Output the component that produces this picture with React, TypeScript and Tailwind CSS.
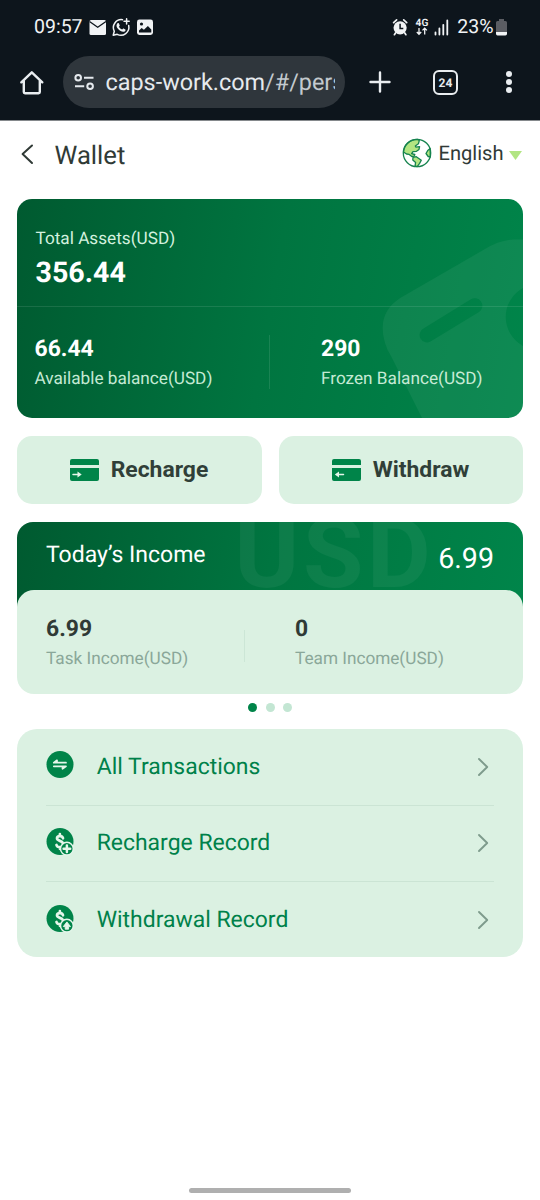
import React from "react";

function StatusBar() {
  return (
    <div className="flex h-[54px] items-center pl-[34px] pr-[32px] text-[#f1f3f5]">
      <span className="w-[54px] text-[19.5px] leading-6">09:57</span>
      <svg width="70" height="24" viewBox="0 0 70 24" className="ml-[1px]">
        <rect x="0.5" y="5" width="16.5" height="15" rx="1.5" fill="#f1f3f5" />
        <path d="M0.5 6.5 L8.7 12.2 L17 6.5" fill="none" stroke="#0d151c" strokeWidth="1.3" />
        <g fill="none" stroke="#f1f3f5" strokeWidth="1.5" strokeLinecap="round" strokeLinejoin="round">
          <path d="M33.5 4.7 A8 8 0 0 0 25.3 16.3 L24.2 20.3 L28.2 19.3 A8 8 0 0 0 39.7 10.5" />
          <path d="M37.6 3.7 v5.2 M35 6.3 h5.2" />
        </g>
        <path d="M28.3 8.4 c.5-.6 1.3-.6 1.6 0 l.8 1.8 c.2.5-.6 1.2-.7 1.5 c.7 1.4 1.8 2.3 3.1 2.8 c.5-.3 1-1.2 1.5-1 l1.7.9 c.6.3.2 1.3-.3 1.8 c-1.2 1-2.9.7-4.4-.1 c-2-1.1-3.8-3.1-4.1-5 c-.1-1.1.2-2 .8-2.7Z" fill="#f1f3f5" />
        <rect x="48" y="4.5" width="16" height="15.5" rx="2.4" fill="#f1f3f5" />
        <circle cx="52.5" cy="9" r="1.6" fill="#0d151c" />
        <path d="M50 17.5 v-2 l2.7-2.5 2.2 1.7 4-3.8 3.4 3.5 v3.1Z" fill="#0d151c" />
      </svg>
      <div className="flex-1" />
      <svg width="64" height="24" viewBox="0 0 64 24" className="mr-[1px]">
        <g fill="none" stroke="#f1f3f5" strokeWidth="1.7" strokeLinecap="round">
          <path d="M1.6 7.6 l3-2.8 M14.7 7.6 l-3-2.8 M3.5 18 l-1.1 1.7 M12.8 18 l1.1 1.7" />
        </g>
        <circle cx="8.1" cy="12.8" r="6.6" fill="#f1f3f5" />
        <path d="M8.1 8.8 v4.6 h3.2" fill="none" stroke="#0d151c" strokeWidth="1.5" />
        <text x="23.6" y="11.2" fontFamily="Roboto" fontWeight="600" fontSize="10.2" fill="#f1f3f5">4G</text>
        <path d="M27 13 v6 M24.8 17 l2.2 2.3 2.2-2.3 M32.7 19.5 v-6 M30.5 15.4 l2.2-2.3 2.2 2.3" fill="none" stroke="#f1f3f5" strokeWidth="1.3" />
        <path d="M43.5 17.5 v2 M47.4 13.5 v6 M51.3 9.8 v9.7 M55.3 5.5 v14" stroke="#f1f3f5" strokeWidth="1.8" strokeLinecap="round" />
      </svg>
      <span className="text-[19.5px] leading-6">23%</span>
      <svg width="12" height="24" viewBox="0 0 12 24" className="ml-[2.5px]">
        <path d="M3 4 h5 v2 h1.5 a1.6 1.6 0 0 1 1.5 1.6 V17 H0 V7.6 A1.6 1.6 0 0 1 1.5 6 H3Z" fill="#5b5d63" />
        <path d="M0 17 h11 v1.8 a1.6 1.6 0 0 1 -1.6 1.6 h-7.8 a1.6 1.6 0 0 1 -1.6 -1.6Z" fill="#f1f3f5" />
      </svg>
    </div>
  );
}

function BrowserBar() {
  return (
    <div className="flex h-[67px] items-start border-b border-[#85898c] text-[#e6eaee]">
      <svg width="26" height="28" viewBox="0 0 26 28" className="ml-[19px] mt-[15px]" fill="none" stroke="#e9edf0" strokeWidth="2.4" strokeLinejoin="round" strokeLinecap="round">
        <path d="M2.3 13.3 L12.8 3.3 L23.3 13.3 M4.8 11.5 V23 a1.2 1.2 0 0 0 1.2 1.2 h13.6 a1.2 1.2 0 0 0 1.2-1.2 V11.5" />
      </svg>
      <div className="ml-[18px] mt-[2px] flex h-[52px] w-[282px] items-center rounded-full bg-[#2f363c] pl-[11px] pr-[10px]">
        <svg width="22" height="22" viewBox="0 0 22 22" className="shrink-0" fill="none" stroke="#e6eaee" strokeWidth="2">
          <circle cx="4.2" cy="6.8" r="2.8" />
          <path d="M10 6.8 h9.5 M1 15.3 h9.2" />
          <circle cx="16.1" cy="15.3" r="2.8" />
        </svg>
        <div className="ml-[9.5px] min-w-0 flex-1 overflow-hidden whitespace-nowrap text-[23.4px] leading-8">
          caps-work.com<span className="text-[#c3c9ce]">/#/pers</span>
        </div>
      </div>
      <svg width="22" height="22" viewBox="0 0 22 22" className="ml-[24px] mt-[17px]">
        <path d="M11 1.5 v19 M1.5 11 h19" stroke="#e9edf0" strokeWidth="2.4" strokeLinecap="round" />
      </svg>
      <div className="ml-[42px] mt-[16px] flex h-[25px] w-[25px] items-center justify-center rounded-[6px] border-2 border-[#e9edf0] text-[12px] font-bold leading-none">24</div>
      <svg width="8" height="24" viewBox="0 0 8 24" className="ml-[47px] mt-[16px]" fill="#e9edf0">
        <circle cx="4" cy="4" r="3" />
        <circle cx="4" cy="12" r="3" />
        <circle cx="4" cy="20" r="3" />
      </svg>
    </div>
  );
}

function Globe() {
  return (
    <svg width="30" height="30" viewBox="0 0 30 30">
      <circle cx="15" cy="15" r="13.7" fill="#fff" />
      <g fill="#b2e582" stroke="#16834e" strokeWidth="1.3" strokeLinejoin="round">
        <path d="M1.5 14 C2 7 7.5 1.6 15.5 1.4 L17.3 2.5 L16.4 5.8 L13.3 8 L14 9.2 L17.6 8.6 L17 11.4 L14.5 13.3 L11 13.6 L9.6 15.6 L12.8 16.5 L12.2 18.2 L9.8 18.5 L7.2 16.4 L4.5 16Z" />
        <path d="M11 19.3 L14.3 18.7 L19.3 22.3 L17.6 25.4 L15.2 28.6 L13 28 L13.6 24.6 L10.8 22.1Z" />
        <path d="M28.2 10.5 L25.7 12.6 L24 15.5 L26.2 18.5 L28.3 19Z" />
      </g>
      <circle cx="15" cy="15" r="13.7" fill="none" stroke="#16834e" strokeWidth="1.3" />
    </svg>
  );
}

function PageHeader() {
  return (
    <header className="flex h-[78px] items-start pl-[20px] pr-[18px] text-[#303a36]">
      <svg width="14" height="22" viewBox="0 0 14 22" className="mt-[22px]" fill="none" stroke="#303a36" strokeWidth="2" strokeLinecap="round" strokeLinejoin="round">
        <path d="M12 2.5 L2.6 11 L12 20" />
      </svg>
      <h1 className="ml-[20.5px] mt-[19px] text-[25.7px] leading-8">Wallet</h1>
      <div className="ml-auto mt-[16px] flex items-center">
        <Globe />
        <span className="ml-[6px] text-[20.1px] leading-8">English</span>
        <svg width="13" height="9" viewBox="0 0 13 9" className="ml-[5.5px] mt-[4px]">
          <path d="M0 0 H13 L6.5 9Z" fill="#b2e582" />
        </svg>
      </div>
    </header>
  );
}

function AssetsCard() {
  return (
    <section className="relative h-[219px] overflow-hidden rounded-[15px] bg-[linear-gradient(100deg,#005a30_0%,#007540_50%,#00854a_100%)] text-white">
      <svg className="absolute inset-0" width="506" height="219" viewBox="17 199 506 219">
        <path
          fill="#fff"
          fillOpacity="0.055"
          fillRule="evenodd"
          d="M523 239.5 H513 Q499 240.5 485 249 L401 297.5 Q376 313 385 343 Q387 350 391 356 L422 418 H523 V346 A33 33 0 0 1 523 288Z M470.5 299.5 L423.5 328.5 A6.6 6.6 0 0 0 430.5 341.5 L479 312 A7 7 0 0 0 470.5 299.5Z"
        />
      </svg>
      <div className="h-[107.5px] border-b border-white/10 pl-[18.5px] pt-[28px]">
        <div className="text-[17.2px] leading-6 text-[#d3f1df]">Total Assets(USD)</div>
        <div className="mt-[4px] text-[28.6px] font-bold leading-[34px]">356.44</div>
      </div>
      <div className="flex pt-[28px]">
        <div className="h-[54px] w-[253px] border-r border-white/10 pl-[17.5px]">
          <div className="text-[22.9px] font-bold leading-7">66.44</div>
          <div className="mt-[4.5px] text-[17.2px] leading-6 text-[#c5ead4]">Available balance(USD)</div>
        </div>
        <div className="pl-[51px]">
          <div className="text-[22.9px] font-bold leading-7">290</div>
          <div className="mt-[4.5px] text-[17.2px] leading-6 text-[#c5ead4]">Frozen Balance(USD)</div>
        </div>
      </div>
    </section>
  );
}

function CardIcon({ left = false }: { left?: boolean }) {
  return (
    <svg width="29" height="22" viewBox="0 0 29 22">
      <path d="M0 6 V2 Q0 0 2 0 H27 Q29 0 29 2 V6Z M0 9 H29 V20 Q29 22 27 22 H2 Q0 22 0 20Z" fill="#008449" />
      <g transform={left ? "translate(14.5 0) scale(-1 1)" : undefined}>
        <path d="M3 15.5 H8" stroke="#e5f6eb" strokeWidth="1.5" strokeLinecap="round" />
        <path d="M7.5 12.5 L11.7 15.5 L7.5 18.5Z" fill="#e5f6eb" />
      </g>
    </svg>
  );
}

const actionClass =
  "flex h-[68.5px] items-center justify-center gap-[11.5px] rounded-[15px] bg-[#dbf1e2] text-[22.9px] font-bold leading-7 text-[#303f38]";

function Actions() {
  return (
    <div className="mt-[17.5px] grid grid-cols-2 gap-[17px]">
      <button className={actionClass}>
        <CardIcon />
        Recharge
      </button>
      <button className={actionClass}>
        <CardIcon left />
        Withdraw
      </button>
    </div>
  );
}

function IncomeCard() {
  return (
    <section className="relative mt-[18px] h-[172px]">
      <div className="relative h-[86px] overflow-hidden rounded-t-[16px] bg-[linear-gradient(100deg,#005a30_0%,#007540_50%,#00854a_100%)] text-white">
        <span className="absolute left-[217.5px] top-[-18.5px] text-[98px] font-bold leading-[100px] tracking-[3.8px] text-white/5">USD</span>
        <div className="relative flex items-start justify-between px-[29px]">
          <span className="mt-[19px] text-[23px] leading-7">Today’s Income</span>
          <span className="mt-[19px] text-[28.6px] leading-[34px]">6.99</span>
        </div>
      </div>
      <div className="relative -mt-[18.5px] flex h-[104.5px] rounded-[17px] bg-[#dbf1e2] pt-[25px]">
        <div className="w-[227px] pl-[29px]">
          <div className="text-[22.9px] font-bold leading-7 text-[#303a36]">6.99</div>
          <div className="mt-[4px] text-[17.2px] leading-6 text-[#8aa799]">Task Income(USD)</div>
        </div>
        <div className="mt-[15px] h-[32px] w-px bg-[#cce6d6]" />
        <div className="pl-[50px]">
          <div className="text-[22.9px] font-bold leading-7 text-[#303a36]">0</div>
          <div className="mt-[4px] text-[17.2px] leading-6 text-[#8aa799]">Team Income(USD)</div>
        </div>
      </div>
    </section>
  );
}

function RowIcon({ kind }: { kind: "swap" | "plus" | "up" }) {
  return (
    <svg width="29" height="28" viewBox="0 0 29 28">
      <circle cx="14" cy="13.5" r="13.5" fill="#008449" />
      {kind === "swap" ? (
        <path d="M7.8 11.7 H20 M7.8 11.7 L11 9.3 V11.7 M7.8 15.3 H20 L16.5 17.8 V15.3" fill="#e5f6eb" stroke="#e5f6eb" strokeWidth="1.7" strokeLinecap="round" strokeLinejoin="round" />
      ) : (
        <>
          <path d="M17 10.3 C16.5 7.3 11 7.3 11 10.3 C11 13.2 16.5 12.5 17 15.5 M10.5 17 C11 18.9 12 19.3 14 19.3 M13.9 6.2 V8 M13.9 19 V20.8" fill="none" stroke="#e5f6eb" strokeWidth="2.7" strokeLinecap="round" />
          <circle cx="20.9" cy="20.7" r="6.4" fill="#008449" stroke="#e5f6eb" strokeWidth="1.5" />
          {kind === "plus" ? (
            <path d="M20.9 17.4 V24 M17.6 20.7 H24.2" stroke="#e5f6eb" strokeWidth="2.5" strokeLinecap="round" />
          ) : (
            <path d="M20.9 16.9 L24.5 21.6 H22.6 V24.2 H19.2 V21.6 H17.3Z" fill="#e5f6eb" stroke="#e5f6eb" strokeWidth="0.9" strokeLinejoin="round" />
          )}
        </>
      )}
    </svg>
  );
}

const records: { label: string; kind: "swap" | "plus" | "up" }[] = [
  { label: "All Transactions", kind: "swap" },
  { label: "Recharge Record", kind: "plus" },
  { label: "Withdrawal Record", kind: "up" },
];

function Records() {
  return (
    <nav className="mt-[16.5px] h-[228.5px] divide-y divide-[#cbe4d4] rounded-[20px] bg-[#dbf1e2] px-[29px] pt-[0.8px]">
      {records.map((r) => (
        <a key={r.label} className="flex h-[76.3px] items-center">
          <span className="-mt-[3px] ml-[0.3px]">
            <RowIcon kind={r.kind} />
          </span>
          <span className="-mt-[0.5px] ml-[21.4px] text-[22.95px] leading-7 text-[#00814a]">{r.label}</span>
          <svg width="12" height="20" viewBox="0 0 12 20" className="ml-auto mr-[5px]" fill="none" stroke="#7e9b8c" strokeWidth="1.9" strokeLinecap="round" strokeLinejoin="round">
            <path d="M2 2 L10.2 10 L2 18" />
          </svg>
        </a>
      ))}
    </nav>
  );
}

export default function App() {
  return (
    <div className="flex h-[1200px] w-[540px] flex-col overflow-hidden bg-white font-['Roboto',sans-serif] [text-rendering:geometricPrecision]">
      <div className="bg-[#0d151c]">
        <StatusBar />
        <BrowserBar />
      </div>
      <PageHeader />
      <main className="px-[17px]">
        <AssetsCard />
        <Actions />
        <IncomeCard />
        <div className="mt-[9px] flex justify-center gap-[8.5px]">
          <i className="h-[9px] w-[9px] rounded-full bg-[#008449]" />
          <i className="h-[9px] w-[9px] rounded-full bg-[#c3e6d3]" />
          <i className="h-[9px] w-[9px] rounded-full bg-[#c3e6d3]" />
        </div>
        <Records />
      </main>
      <div className="mt-auto flex justify-center pb-[7px]">
        <div className="h-[5px] w-[162px] rounded-full bg-[#afafaf]" />
      </div>
    </div>
  );
}
